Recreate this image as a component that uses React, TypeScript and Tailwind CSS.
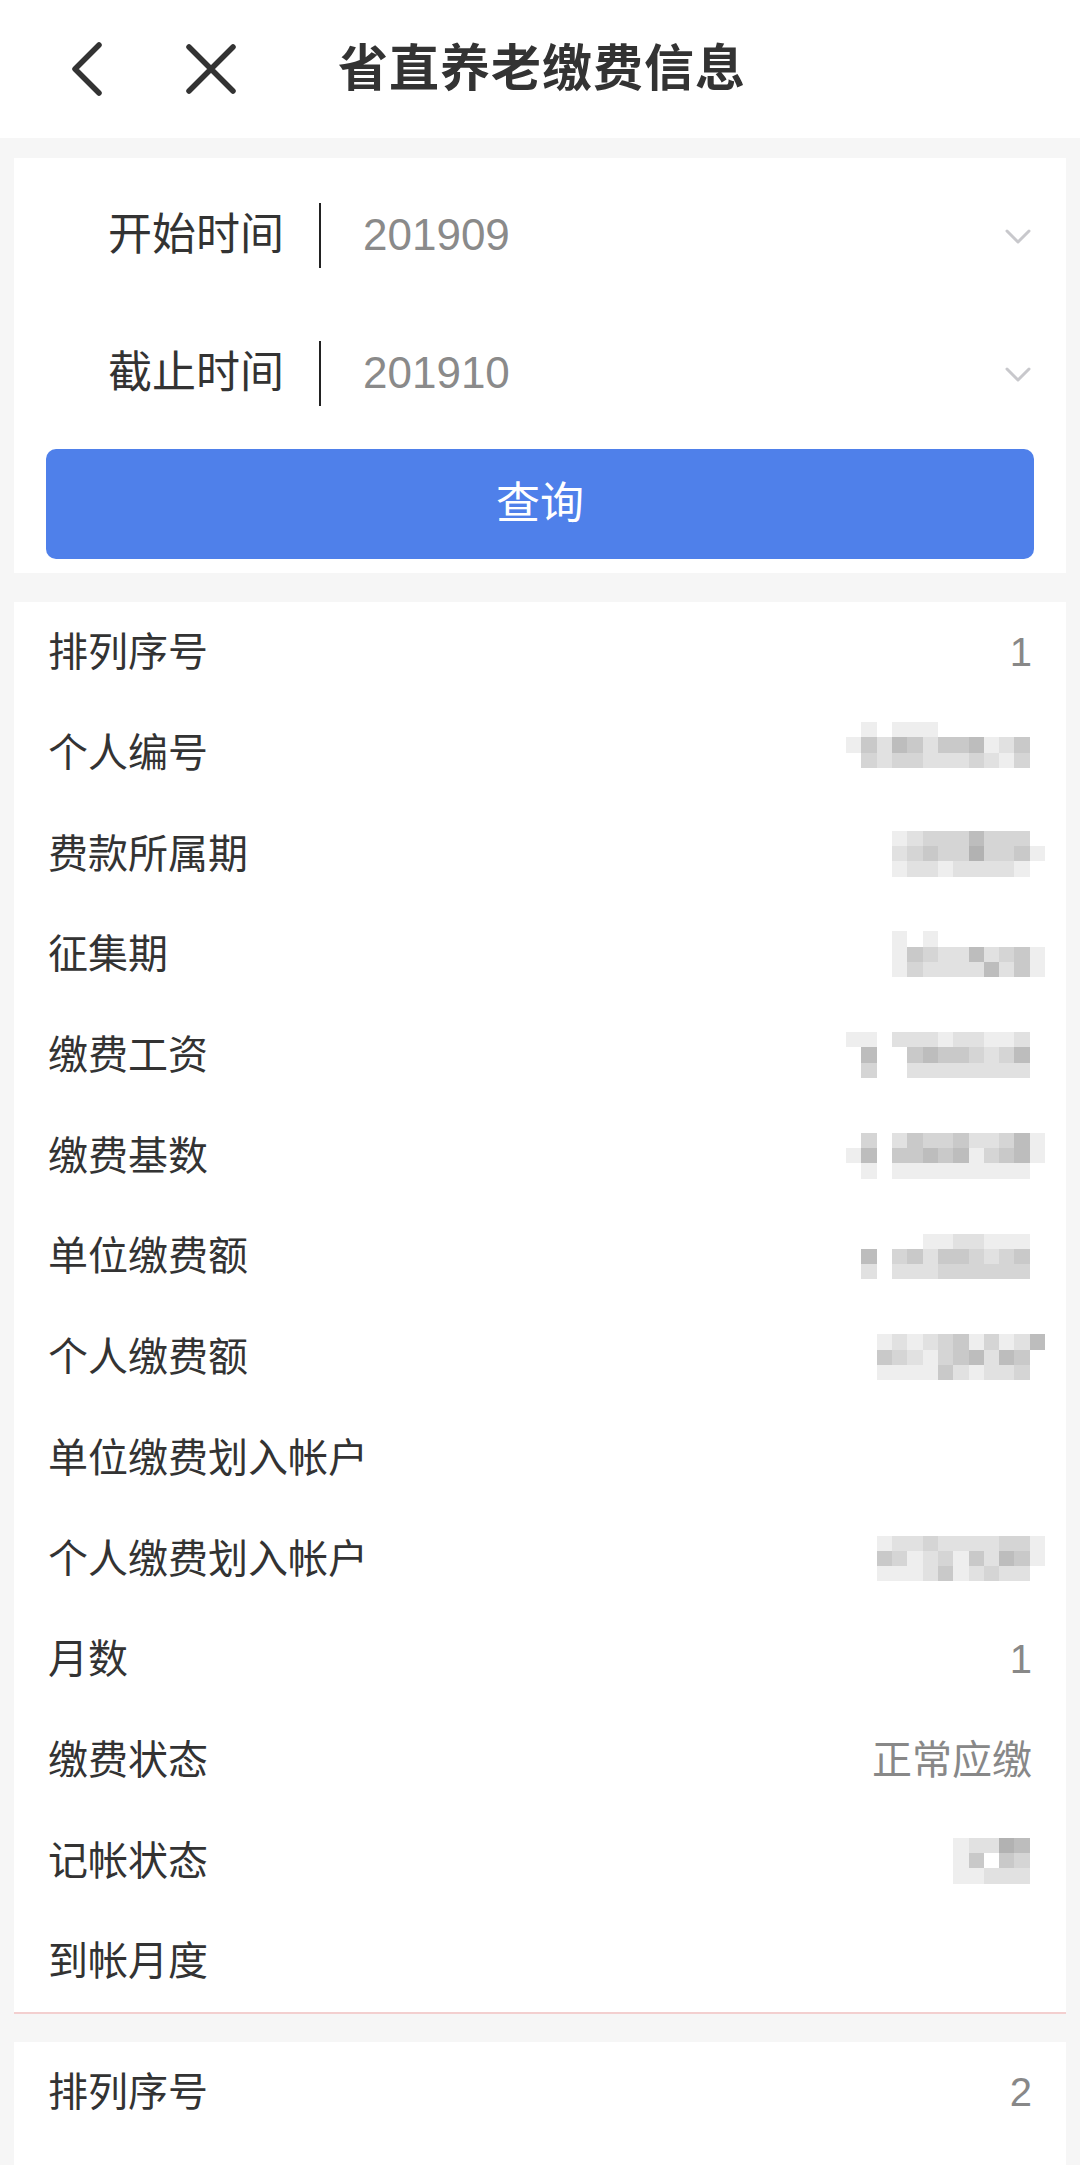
const shades = [
  "bg-transparent",
  "bg-[#eeeeee]",
  "bg-[#e1e1e1]",
  "bg-[#d5d5d5]",
  "bg-[#c9c9c9]",
  "bg-[#bdbdbd]",
  "bg-[#b2b2b2]",
];

// pixelated (redacted) value, one digit per 15px block
function Mosaic({ rows, className = "" }: { rows: string[]; className?: string }) {
  return (
    <div className={"mr-[-13px] flex flex-col " + className}>
      {rows.map((r, i) => (
        <div key={i} className="flex">
          {r.split("").map((c, j) => (
            <div key={j} className={"h-[15.3px] w-[15.3px] " + shades[Number(c)]} />
          ))}
        </div>
      ))}
    </div>
  );
}

type Row = { label: string; value?: string; mosaic?: string[]; mosaicClass?: string };

const record1: Row[] = [
  { label: "排列序号", value: "1" },
  {
    label: "个人编号",
    mosaic: ["0101110000000", "1425424451240", "0323322232130"],
    mosaicClass: "mb-[16px]",
  },
  { label: "费款所属期", mosaic: ["0001233353330", "0002343363341", "0001221222210"] },
  { label: "征集期", mosaic: ["0001010000000", "0001432252341", "0001322225241"] },
  { label: "缴费工资", mosaic: ["1102221221120", "0500454432350", "0300222222220"] },
  { label: "缴费基数", mosaic: ["0302433422351", "1504454513451", "0101111111110"] },
  { label: "单位缴费额", mosaic: ["0000011221110", "0503424432340", "0202223333330"] },
  { label: "个人缴费额", mosaic: ["0012123413125", "0043213452540", "0011114212230"] },
  { label: "单位缴费划入帐户" },
  { label: "个人缴费划入帐户", mosaic: ["0012232222331", "0043123142541", "0011124123220"] },
  { label: "月数", value: "1" },
  { label: "缴费状态", value: "正常应缴" },
  { label: "记帐状态", mosaic: ["0000000122650", "0000000140430", "0000000112220"] },
  { label: "到帐月度" },
];

function InfoRow({ row }: { row: Row }) {
  return (
    <div className="flex h-[100.7px] items-center justify-between px-[34px]">
      <span className="text-[40px] leading-none text-[#333333]">{row.label}</span>
      {row.value && <span className="text-[40px] leading-none text-[#888888]">{row.value}</span>}
      {row.mosaic && <Mosaic rows={row.mosaic} className={row.mosaicClass} />}
    </div>
  );
}

function DateField({ label, value }: { label: string; value: string }) {
  return (
    <div className="flex h-[138px] items-center pl-[94px] pr-[34px]">
      <span className="text-[44px] leading-none text-[#333333]">{label}</span>
      <div className="ml-[35px] h-[65px] w-[2px] bg-[#222222]" />
      <span className="ml-[42px] flex-1 text-[44px] leading-none text-[#8a8a8a]">{value}</span>
      <svg width="28" height="18" viewBox="0 0 28 18" className="mt-[4px]">
        <path d="M3 3 L14 14 L25 3" fill="none" stroke="#c8c8cc" strokeWidth="3" strokeLinecap="round" strokeLinejoin="round" />
      </svg>
    </div>
  );
}

export default function App() {
  return (
    <main
      className="min-h-screen w-[1080px] bg-[#f6f6f6]"
      style={{ fontFamily: '"Liberation Sans", "Noto Sans CJK SC", sans-serif' }}
    >
      {/* Top bar */}
      <header className="flex h-[138px] items-center bg-white">
        <svg width="40" height="60" viewBox="0 0 40 60" className="ml-[66px]">
          <path d="M33 6 L9 30 L33 54" fill="none" stroke="#333333" strokeWidth="5.5" strokeLinecap="round" strokeLinejoin="round" />
        </svg>
        <svg width="56" height="56" viewBox="0 0 56 56" className="ml-[77px]">
          <path d="M6 6 L50 50 M50 6 L6 50" fill="none" stroke="#333333" strokeWidth="5.5" strokeLinecap="round" />
        </svg>
        <h1 className="ml-[99px] text-[50px] font-bold leading-none tracking-[1px] text-[#333333]">
          省直养老缴费信息
        </h1>
      </header>

      {/* Query form */}
      <section className="mx-[14px] mt-[20px] bg-white pb-[14px] pt-[8px]">
        <DateField label="开始时间" value="201909" />
        <DateField label="截止时间" value="201910" />
        <div className="mx-[32px] mt-[7px] flex h-[110px] items-center justify-center rounded-[10px] bg-[#4f80ea]">
          <span className="text-[44px] leading-none text-white">查询</span>
        </div>
      </section>

      {/* Records */}
      <section className="mx-[14px] mt-[29px] border-b-2 border-[#f3cfcf] bg-white">
        {record1.map((r) => (
          <InfoRow key={r.label} row={r} />
        ))}
      </section>

      <section className="mx-[14px] mt-[28px] bg-white">
        <InfoRow row={{ label: "排列序号", value: "2" }} />
        <div className="h-[100px]" />
      </section>
    </main>
  );
}
